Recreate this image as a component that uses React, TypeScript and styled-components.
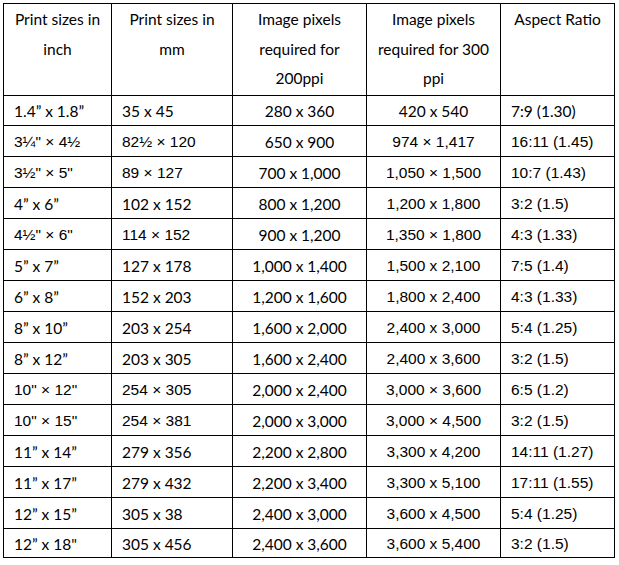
import React from "react";
import styled, { createGlobalStyle } from "styled-components";

const GlobalStyle = createGlobalStyle`
    html, body {
        margin: 0;
        padding: 0;
        background: #ffffff;
    }
`;

const Page = styled.div`
    padding: 3px 0 0 3px;
`;

// Table drawn as a grid: the black background shows through the 1px gaps as rules
const Grid = styled.div`
    display: grid;
    width: 612px;
    box-sizing: border-box;
    grid-template-columns: 107px 120px 133px 133px 113px;
    grid-template-rows: 91px 29px repeat(13, 30px) 28px;
    gap: 1px;
    padding: 1px;
    background: #000000;
`;

const HeadCell = styled.div`
    background: #ffffff;
    padding: 1px 4px 0;
    font-family: Lato, "Open Sans", sans-serif;
    font-size: 15.5px;
    line-height: 29.5px;
    color: #000000;
    text-align: center;
`;

const Cell = styled.div<{ $align: "left" | "center"; $arial?: boolean }>`
    background: #ffffff;
    display: flex;
    align-items: center;
    justify-content: ${(p) => (p.$align === "center" ? "center" : "flex-start")};
    padding: 1px 10px 0;
    font-family: ${(p) => (p.$arial ? '"Liberation Sans", Arial, sans-serif' : 'Lato, "Open Sans", sans-serif')};
    font-size: 15.5px;
    color: #000000;
    white-space: nowrap;
`;

type Entry = string | { text: string; arial: true };
const A = (text: string): Entry => ({ text, arial: true });

const headers: React.ReactNode[] = [
    <>Print sizes in<br />inch</>,
    <>Print sizes in<br />mm</>,
    <>Image pixels<br />required for<br />200ppi</>,
    <>Image pixels<br />required for 300<br />ppi</>,
    <>Aspect Ratio</>,
];

const aligns: ("left" | "center")[] = ["left", "left", "center", "center", "left"];

const rows: Entry[][] = [
    ["1.4\u201D x 1.8\u201D", "35 x 45", "280 x 360", "420 x 540", "7:9 (1.30)"],
    [A("3\u00BC\" \u00D7 4\u00BD"), A("82\u00BD \u00D7 120"), "650 x 900", A("974 \u00D7 1,417"), A("16:11 (1.45)")],
    [A("3\u00BD\" \u00D7 5\""), A("89 \u00D7 127"), "700 x 1,000", A("1,050 \u00D7 1,500"), A("10:7 (1.43)")],
    ["4\u201D x 6\u201D", "102 x 152", "800 x 1,200", A("1,200 x 1,800"), A("3:2 (1.5)")],
    [A("4\u00BD\" \u00D7 6\""), A("114 \u00D7 152"), "900 x 1,200", A("1,350 \u00D7 1,800"), A("4:3 (1.33)")],
    ["5\u201D x 7\u201D", "127 x 178", "1,000 x 1,400", A("1,500 x 2,100"), A("7:5 (1.4)")],
    ["6\u201D x 8\u201D", "152 x 203", "1,200 x 1,600", A("1,800 x 2,400"), A("4:3 (1.33)")],
    ["8\u201D x 10\u201D", "203 x 254", "1,600 x 2,000", A("2,400 x 3,000"), A("5:4 (1.25)")],
    ["8\u201D x 12\u201D", "203 x 305", "1,600 x 2,400", A("2,400 x 3,600"), A("3:2 (1.5)")],
    [A("10\" \u00D7 12\""), A("254 \u00D7 305"), "2,000 x 2,400", A("3,000 \u00D7 3,600"), A("6:5 (1.2)")],
    [A("10\" \u00D7 15\""), A("254 \u00D7 381"), "2,000 x 3,000", A("3,000 \u00D7 4,500"), A("3:2 (1.5)")],
    ["11\u201D x 14\u201D", "279 x 356", "2,200 x 2,800", A("3,300 x 4,200"), A("14:11 (1.27)")],
    ["11\u201D x 17\u201D", "279 x 432", "2,200 x 3,400", A("3,300 x 5,100"), A("17:11 (1.55)")],
    ["12\u201D x 15\u201D", "305 x 38", "2,400 x 3,000", A("3,600 x 4,500"), A("5:4 (1.25)")],
    ["12\u201D x 18\"", "305 x 456", "2,400 x 3,600", A("3,600 x 5,400"), A("3:2 (1.5)")],
];

const App: React.FC = () => {
    return (
        <Page>
            <GlobalStyle />
            <Grid>
                {headers.map((h, i) => (
                    <HeadCell key={"h" + i}>{h}</HeadCell>
                ))}
                {rows.map((row, r) =>
                    row.map((entry, c) => {
                        const isArial = typeof entry !== "string";
                        const text = typeof entry === "string" ? entry : entry.text;
                        return (
                            <Cell key={r + "-" + c} $align={aligns[c]} $arial={isArial}>
                                {text}
                            </Cell>
                        );
                    })
                )}
            </Grid>
        </Page>
    );
};

export default App;
